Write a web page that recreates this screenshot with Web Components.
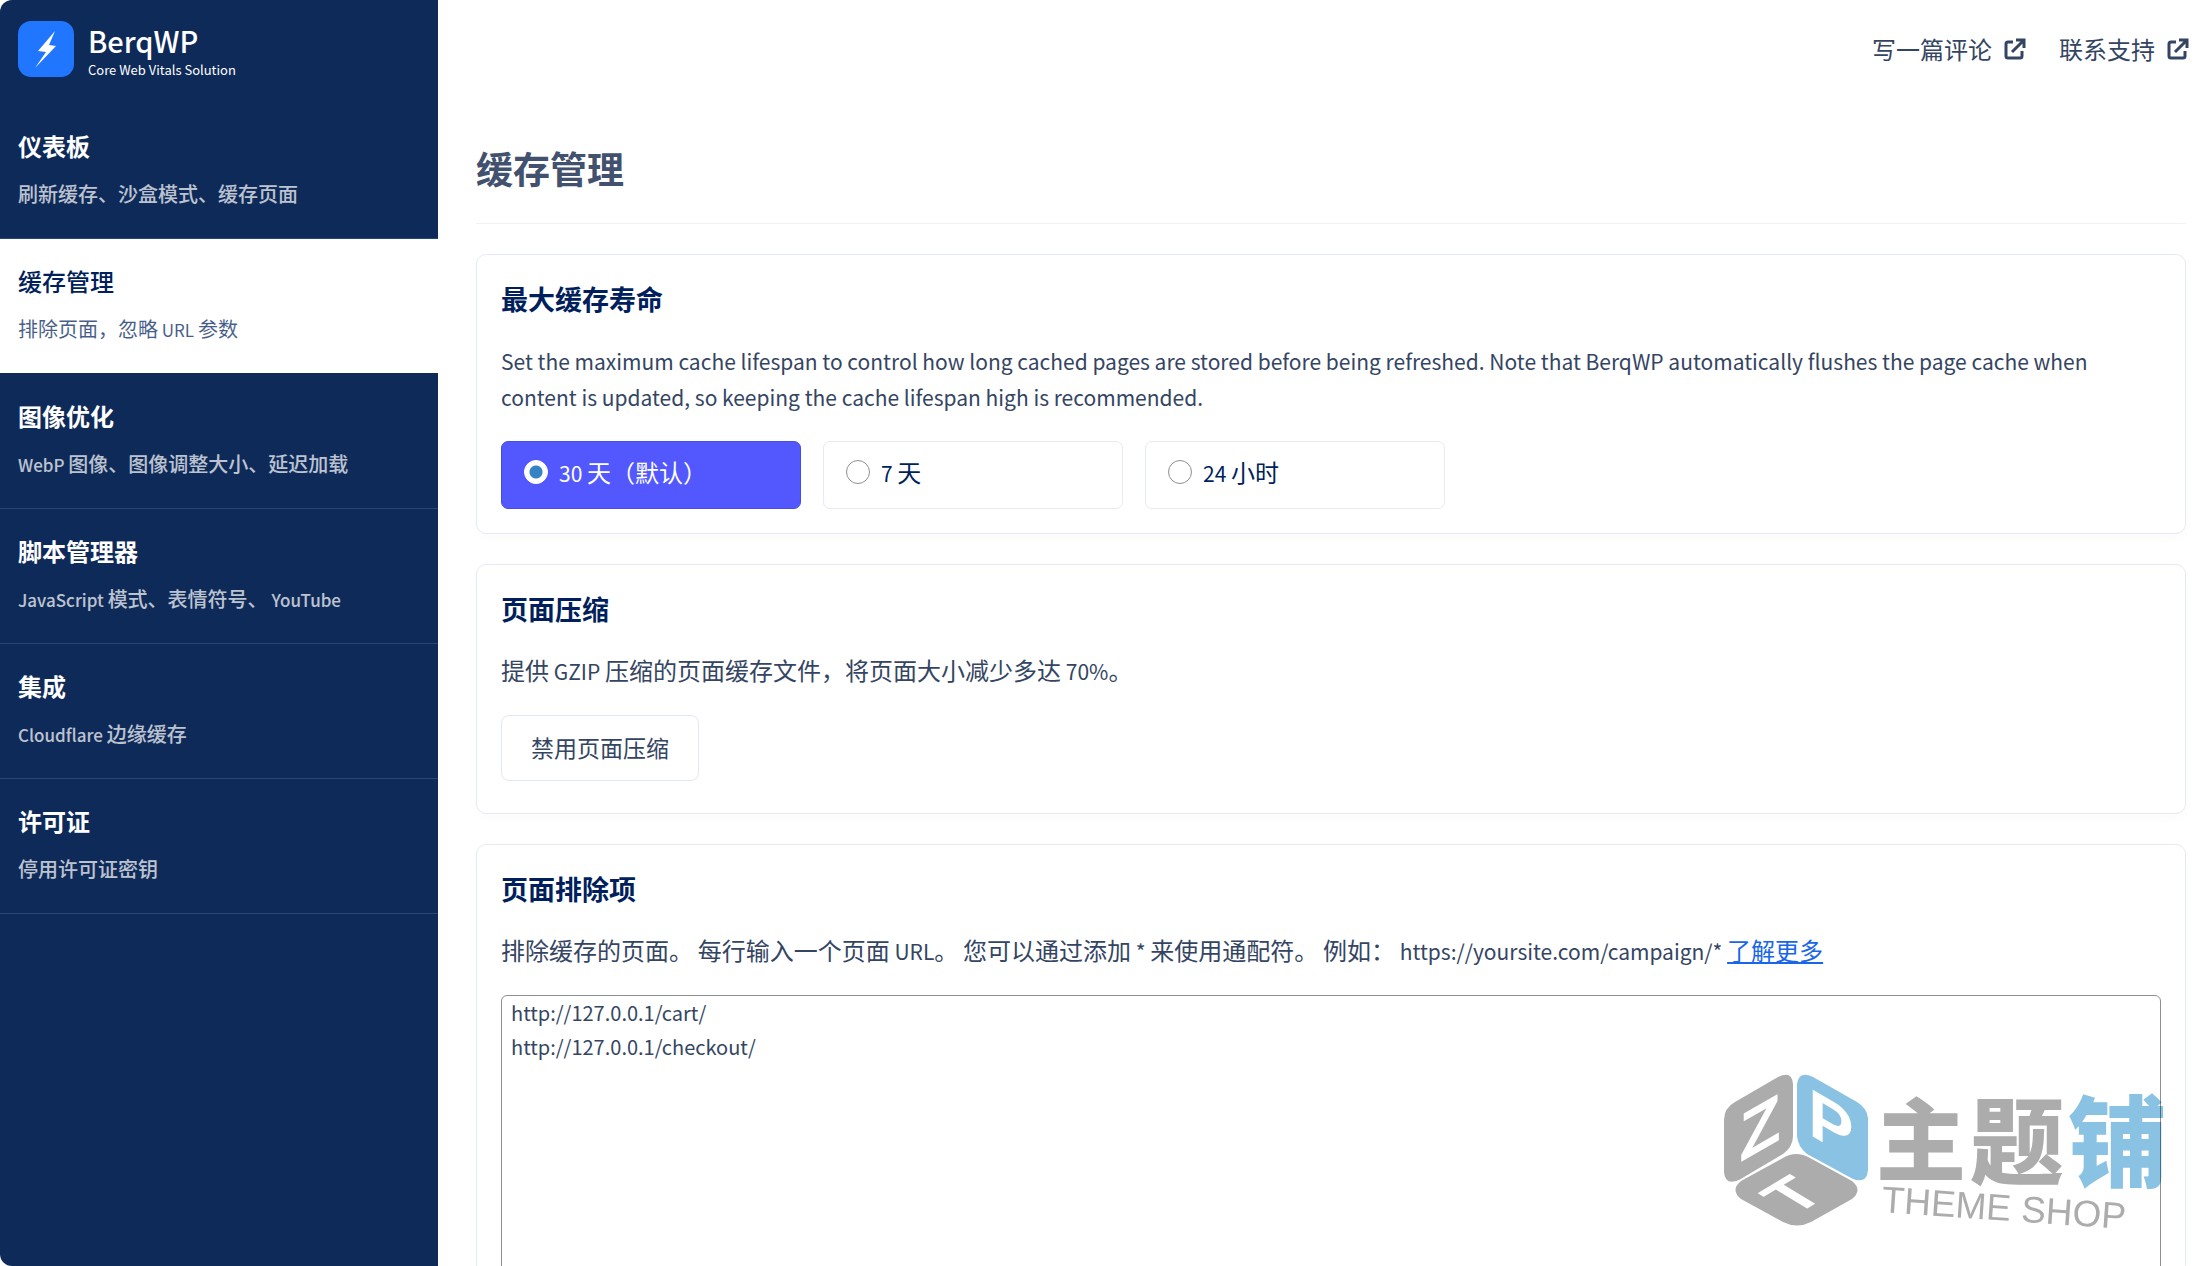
<!DOCTYPE html>
<html lang="zh-CN">
<head>
<meta charset="utf-8">
<title>BerqWP</title>
<style>
    html, body
    {
        margin: 0;
        height: 100%;
        background-color: #fff;
    }

    body
    {
        --navy: #0e2a59;
        --heading: #001f5c;
        --text: #344563;
        --border: #e6eaf6;
        --accent: #5258fe;
        --link: #1a66e8;
        --latin-size: 21px;

        color: var(--text);
        font-family: "Noto Sans CJK SC", sans-serif;
        font-size: 24px;
        line-height: 36px;
    }
</style>
</head>
<body>

<bq-app>
    <bq-sidebar slot="side">
        <bq-nav-item label="仪表板">刷新缓存、沙盒模式、缓存页面</bq-nav-item>
        <bq-nav-item label="缓存管理" active>排除页面，忽略<bq-latin> URL </bq-latin>参数</bq-nav-item>
        <bq-nav-item label="图像优化"><bq-latin>WebP </bq-latin>图像、图像调整大小、延迟加载</bq-nav-item>
        <bq-nav-item label="脚本管理器"><bq-latin>JavaScript </bq-latin>模式、表情符号、<bq-latin>YouTube</bq-latin></bq-nav-item>
        <bq-nav-item label="集成"><bq-latin>Cloudflare </bq-latin>边缘缓存</bq-nav-item>
        <bq-nav-item label="许可证">停用许可证密钥</bq-nav-item>
    </bq-sidebar>

    <bq-ext-link slot="top" href="#review">写一篇评论</bq-ext-link>
    <bq-ext-link slot="top" href="#support">联系支持</bq-ext-link>

    <span slot="title">缓存管理</span>

    <bq-card heading="最大缓存寿命">
        <bq-latin>Set the maximum cache lifespan to control how long cached pages are stored before being refreshed. Note that BerqWP automatically flushes the page cache when content is updated, so keeping the cache lifespan high is recommended.</bq-latin>
        <bq-radios slot="control" name="lifespan">
            <span><bq-latin>30 </bq-latin>天（默认）</span>
            <span><bq-latin>7 </bq-latin>天</span>
            <span><bq-latin>24 </bq-latin>小时</span>
        </bq-radios>
    </bq-card>

    <bq-card heading="页面压缩">
        提供<bq-latin> GZIP </bq-latin>压缩的页面缓存文件，将页面大小减少多达<bq-latin> 70%</bq-latin>。
        <bq-button slot="control">禁用页面压缩</bq-button>
    </bq-card>

    <bq-card heading="页面排除项">
        排除缓存的页面。<bq-latin> </bq-latin>每行输入一个页面<bq-latin> URL</bq-latin>。<bq-latin> </bq-latin>您可以通过添加<bq-latin> * </bq-latin>来使用通配符。<bq-latin> </bq-latin>例如：<bq-latin>https://yoursite.com/campaign/* </bq-latin><bq-link href="#more">了解更多</bq-link>
        <bq-textarea slot="control" label="页面排除项">http://127.0.0.1/cart/
http://127.0.0.1/checkout/</bq-textarea>
    </bq-card>
</bq-app>

<bq-watermark></bq-watermark>

<script>
class BqElement extends HTMLElement
{
    constructor()
    {
        super();
        this.dom = this.attachShadow({mode: 'open'});
    }
}

class BqApp extends BqElement
{
    connectedCallback()
    {
        this.dom.innerHTML = `
            <style>
                :host
                {
                    display: grid;
                    grid-template-columns: 438px 1fr;
                    height: 100vh;
                    border-radius: 12px;
                    overflow: hidden;
                }

                main
                {
                    min-width: 0;
                    overflow-y: auto;
                    scrollbar-width: none;
                    padding: 0 9px 30px 38px;
                }

                header
                {
                    display: flex;
                    justify-content: flex-end;
                    gap: 33px;
                    padding: 31px 0 33px;
                    margin-right: -3px;
                }

                h1
                {
                    margin: 0 0 30px;
                    padding: 40px 0 27px;
                    border-bottom: 1px solid #eff2f8;
                    font-size: 37px;
                    line-height: 56px;
                    font-weight: 700;
                    color: #42526e;
                }

                section
                {
                    display: flex;
                    flex-direction: column;
                    gap: 30px;
                }
            </style>

            <slot name="side"></slot>
            <main>
                <header><slot name="top"></slot></header>
                <h1><slot name="title"></slot></h1>
                <section><slot></slot></section>
            </main>
            `;
    }
}

// latin letters are drawn a size below the chinese text round them
class BqLatin extends BqElement
{
    connectedCallback()
    {
        this.dom.innerHTML = `
            <style>
                :host
                {
                    display: inline;
                    font-size: var(--latin-size);
                    line-height: 1;
                }
            </style><slot></slot>`;
    }
}

class BqSidebar extends BqElement
{
    connectedCallback()
    {
        this.dom.innerHTML = `
            <style>
                :host
                {
                    display: block;
                    background-color: var(--navy);
                    color: #fff;
                }

                .brand
                {
                    display: flex;
                    gap: 14px;
                    padding: 21px 18px 0;
                    height: 83px;
                }

                .brand svg
                {
                    width: 56px;
                    height: 56px;
                }

                .name, .tag
                {
                    display: block;
                }

                .name
                {
                    font-size: 29px;
                    line-height: 38px;
                    font-weight: 500;
                }

                .tag
                {
                    font-size: 13px;
                    line-height: 22px;
                }
            </style>

            <div class="brand">
                <svg viewBox="0 0 56 56">
                    <rect width="56" height="56" rx="13" fill="#2176ff"/>
                    <path d="M37 10 L20 30 L28 31 L17 47 L38 25 L31 24 Z" fill="#fff"/>
                </svg>
                <div>
                    <span class="name">BerqWP</span>
                    <span class="tag">Core Web Vitals Solution</span>
                </div>
            </div>
            <nav><slot></slot></nav>
            `;
    }
}

class BqNavItem extends BqElement
{
    connectedCallback()
    {
        this.dom.innerHTML = `
            <style>
                :host
                {
                    --latin-size: 17px;
                    display: block;
                    border-bottom: 1px solid #2c4674;
                }

                :host([active])
                {
                    background: #fff padding-box;
                    border-color: var(--navy);
                }

                a
                {
                    display: block;
                    padding: 24px 18px 26px;
                    color: #fff;
                    text-decoration: none;
                }

                b
                {
                    display: block;
                    font-weight: 700;
                    margin-bottom: 12px;
                }

                span
                {
                    display: block;
                    font-size: 20px;
                    font-weight: 500;
                    opacity: 0.72;
                }

                :host([active]) a
                {
                    color: var(--heading);
                }

                :host([active]) b
                {
                    font-weight: 500;
                }

                :host([active]) span
                {
                    font-weight: 400;
                }
            </style>

            <a href="#"><b></b><span><slot></slot></span></a>
            `;

        this.dom.querySelector("b").textContent = this.getAttribute("label");
    }
}

class BqExtLink extends BqElement
{
    connectedCallback()
    {
        this.dom.innerHTML = `
            <style>
                :host
                {
                    display: block;
                }

                a
                {
                    display: flex;
                    align-items: center;
                    gap: 12px;
                    color: inherit;
                    text-decoration: none;
                }

                svg
                {
                    width: 22px;
                    height: 22px;
                }
            </style>

            <a><slot></slot>
                <svg viewBox="0 0 22 22" fill="none" stroke="currentColor" stroke-width="3">
                    <path d="M9 4 H4 Q2 4 2 6 V18 Q2 20 4 20 H16 Q18 20 18 18 V13"/>
                    <path d="M12 2 H20 V10 M19 3 L8 14"/>
                </svg>
            </a>
            `;

        this.dom.querySelector("a").href = this.getAttribute("href");
    }
}

class BqLink extends BqElement
{
    connectedCallback()
    {
        this.dom.innerHTML = `
            <style>
                :host
                {
                    display: inline;
                }

                a
                {
                    color: var(--link);
                }
            </style>

            <a><slot></slot></a>`;

        this.dom.querySelector("a").href = this.getAttribute("href");
    }
}

class BqCard extends BqElement
{
    connectedCallback()
    {
        this.dom.innerHTML = `
            <style>
                :host
                {
                    display: block;
                    padding: 23px 24px 24px;
                    border: 1px solid var(--border);
                    border-radius: 10px;
                    box-shadow: 0 4px 12px rgba(0, 60, 60, 0.02);
                }

                h2
                {
                    margin: 0 0 22px;
                    font-size: 27px;
                    line-height: 42px;
                    font-weight: 700;
                    color: var(--heading);
                }

                p
                {
                    margin: 0 0 27px;
                }
            </style>

            <h2></h2>
            <p><slot></slot></p>
            <slot name="control"></slot>
            `;

        this.dom.querySelector("h2").textContent = this.getAttribute("heading");
    }
}

class BqRadios extends BqElement
{
    connectedCallback()
    {
        this.dom.innerHTML = `
            <style>
                :host
                {
                    display: flex;
                    gap: 22px;
                }

                label
                {
                    display: flex;
                    gap: 11px;
                    box-sizing: border-box;
                    width: 300px;
                    padding: 12px 22px 18px;
                    border: 1px solid var(--border);
                    border-radius: 7px;
                    color: var(--heading);
                }

                label:has(:checked)
                {
                    background-color: var(--accent);
                    border-color: #474de0;
                    color: #fff;
                }

                input
                {
                    appearance: none;
                    box-sizing: border-box;
                    align-self: center;
                    width: 24px;
                    height: 24px;
                    margin: 0;
                    border: 1px solid #8c8f94;
                    border-radius: 50%;
                    background-color: #fff;
                }

                input:checked
                {
                    border-color: #fff;
                    background-image: radial-gradient(circle, #3582c4 6px, transparent 7px);
                }
            </style>
            `;

        // one label and one named slot for each child
        Array.from(this.children).forEach((child, index) =>
        {
            child.slot = "option" + index;

            let label = document.createElement("label");
            label.innerHTML = `<input type="radio"><slot name="${child.slot}"></slot>`;

            let input = label.querySelector("input");
            input.name = this.getAttribute("name");
            input.checked = index == 0;

            this.dom.append(label);
        });
    }
}

class BqButton extends BqElement
{
    connectedCallback()
    {
        this.dom.innerHTML = `
            <style>
                :host
                {
                    display: block;
                    margin-bottom: 8px;
                }

                button
                {
                    display: block;
                    padding: 13px 29px 15px;
                    border: 1px solid #e0e7f5;
                    border-radius: 8px;
                    background-color: #fff;
                    color: inherit;
                    font-family: inherit;
                    font-size: 23px;
                    line-height: 36px;
                }
            </style>

            <button type="button"><slot></slot></button>
            `;
    }
}

class BqTextarea extends BqElement
{
    connectedCallback()
    {
        this.dom.innerHTML = `
            <style>
                :host
                {
                    display: block;
                }

                textarea
                {
                    display: block;
                    box-sizing: border-box;
                    width: 100%;
                    padding: 0 9px;
                    border: 1px solid #8c8f94;
                    border-radius: 6px;
                    background-color: #fff;
                    color: inherit;
                    font-family: inherit;
                    font-size: 20px;
                    line-height: 34px;
                    resize: none;
                }
            </style>

            <textarea rows="12" spellcheck="false"></textarea>
            `;

        let area = this.dom.querySelector("textarea");
        area.setAttribute("aria-label", this.getAttribute("label"));
        area.value = this.textContent;
    }
}

class BqWatermark extends BqElement
{
    connectedCallback()
    {
        this.dom.innerHTML = `
            <style>
                :host
                {
                    position: fixed;
                    right: 26px;
                    bottom: 28px;
                    pointer-events: none;
                    mix-blend-mode: multiply;
                }

                svg
                {
                    display: block;
                    width: 446px;
                    height: 166px;
                    overflow: visible;
                }

                .face
                {
                    font: 700 68px "Liberation Sans", sans-serif;
                    fill: #fff;
                    text-anchor: middle;
                }

                .cn
                {
                    font-family: "Noto Sans CJK SC", sans-serif;
                    font-weight: 900;
                }

                .en
                {
                    font: 400 37px "Liberation Sans", sans-serif;
                }
            </style>

            <svg viewBox="0 0 446 166" fill="#acacac">
                <path d="M55 5 Q69 -2 70 12 V64 Q70 75 60 82 L16 108 Q2 114 1 100 V48 Q1 36 12 30 Z"/>
                <path d="M90 5 Q76 -2 74 12 V64 Q75 75 84 82 L130 107 Q144 112 145 98 V46 Q144 36 134 30 Z" fill="#89c2e3"/>
                <path d="M60 86 Q73 78 87 86 L129 109 Q140 118 129 127 L88 150 Q74 157 60 150 L18 127 Q7 118 18 109 Z"/>
                <text class="face" transform="translate(37 79) skewY(-30)">Z</text>
                <text class="face" transform="translate(108 75) skewY(30)">P</text>
                <text class="face" transform="matrix(0.8 -0.48 0.8 0.48 88 134)">T</text>
                <text class="cn" x="153" y="102" font-size="90">主</text>
                <text class="cn" x="247" y="105" font-size="94">题</text>
                <text class="cn" x="345" y="107" font-size="99" fill="#89c2e3">铺</text>
                <text class="en" transform="translate(158 140) rotate(4)">THEME SHOP</text>
            </svg>
            `;
    }
}

customElements.define("bq-app", BqApp);
customElements.define("bq-latin", BqLatin);
customElements.define("bq-sidebar", BqSidebar);
customElements.define("bq-nav-item", BqNavItem);
customElements.define("bq-ext-link", BqExtLink);
customElements.define("bq-link", BqLink);
customElements.define("bq-card", BqCard);
customElements.define("bq-radios", BqRadios);
customElements.define("bq-button", BqButton);
customElements.define("bq-textarea", BqTextarea);
customElements.define("bq-watermark", BqWatermark);
</script>
</body>
</html>
